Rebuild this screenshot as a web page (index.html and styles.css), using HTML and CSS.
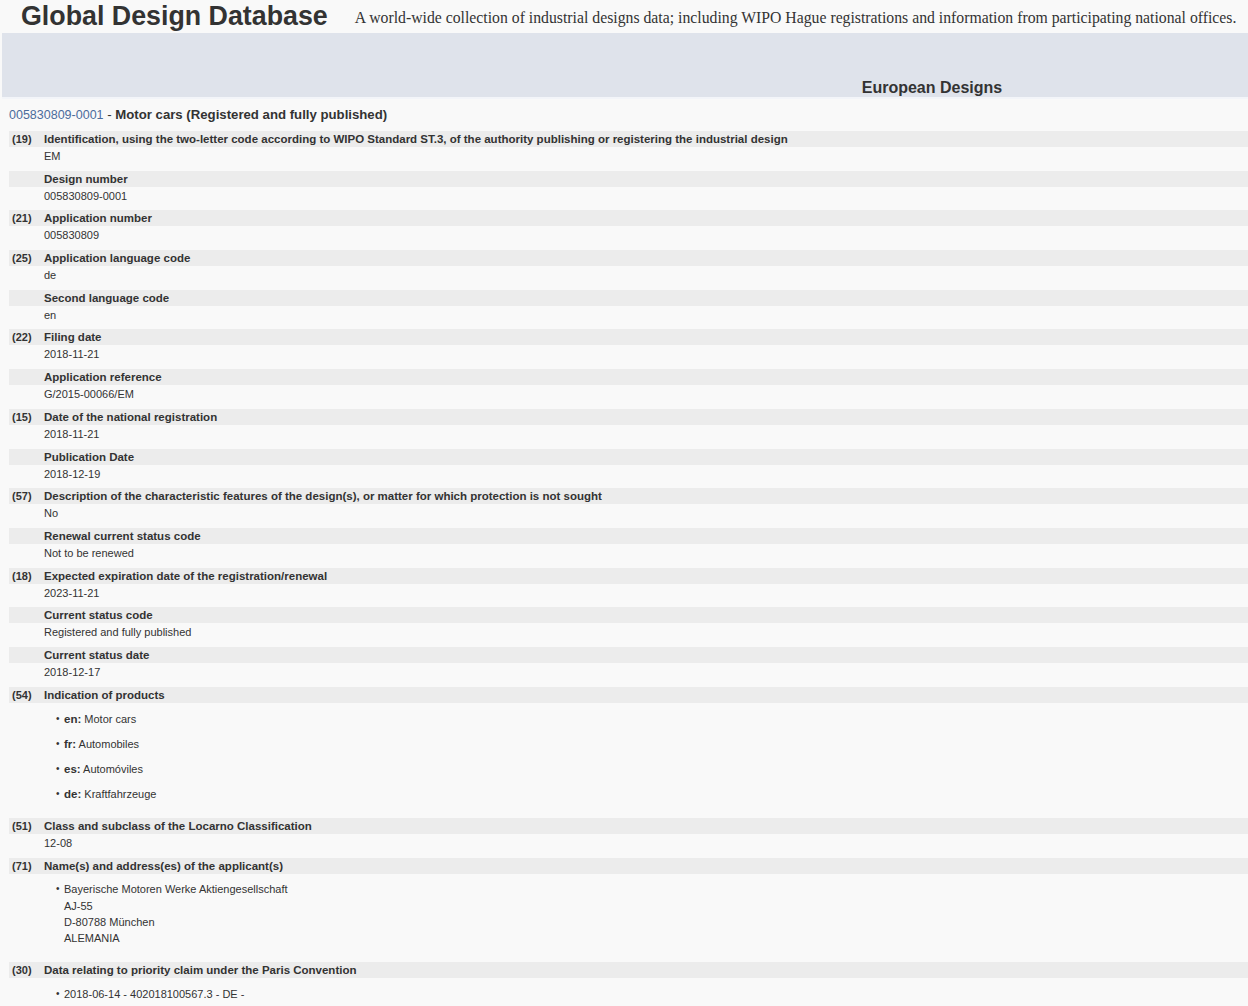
FILE: index.html
```html
<!DOCTYPE html>
<html>
<head>
<meta charset="utf-8">
<title>Global Design Database</title>
<link rel="stylesheet" href="styles.css">
</head>
<body>
<header class="top">
  <h1 class="brand">Global Design Database</h1>
  <p class="tagline">A world-wide collection of industrial designs data; including WIPO Hague registrations and information from participating national offices.</p>
</header>
<div class="band">
  <div class="band-spacer"></div>
  <h2 class="band-title">European Designs</h2>
</div>
<main class="record">
  <div class="rec-title"><a class="rec-link" href="#">005830809-0001</a> - <b>Motor cars (Registered and fully published)</b></div>

  <div class="field"><div class="lbl"><span class="code">(19)</span><span>Identification, using the two-letter code according to WIPO Standard ST.3, of the authority publishing or registering the industrial design</span></div><div class="val">EM</div></div>
  <div class="field"><div class="lbl"><span class="code"></span><span>Design number</span></div><div class="val">005830809-0001</div></div>
  <div class="field"><div class="lbl"><span class="code">(21)</span><span>Application number</span></div><div class="val">005830809</div></div>
  <div class="field"><div class="lbl"><span class="code">(25)</span><span>Application language code</span></div><div class="val">de</div></div>
  <div class="field"><div class="lbl"><span class="code"></span><span>Second language code</span></div><div class="val">en</div></div>
  <div class="field"><div class="lbl"><span class="code">(22)</span><span>Filing date</span></div><div class="val">2018-11-21</div></div>
  <div class="field"><div class="lbl"><span class="code"></span><span>Application reference</span></div><div class="val">G/2015-00066/EM</div></div>
  <div class="field"><div class="lbl"><span class="code">(15)</span><span>Date of the national registration</span></div><div class="val">2018-11-21</div></div>
  <div class="field"><div class="lbl"><span class="code"></span><span>Publication Date</span></div><div class="val">2018-12-19</div></div>
  <div class="field"><div class="lbl"><span class="code">(57)</span><span>Description of the characteristic features of the design(s), or matter for which protection is not sought</span></div><div class="val">No</div></div>
  <div class="field"><div class="lbl"><span class="code"></span><span>Renewal current status code</span></div><div class="val">Not to be renewed</div></div>
  <div class="field"><div class="lbl"><span class="code">(18)</span><span>Expected expiration date of the registration/renewal</span></div><div class="val">2023-11-21</div></div>
  <div class="field"><div class="lbl"><span class="code"></span><span>Current status code</span></div><div class="val">Registered and fully published</div></div>
  <div class="field"><div class="lbl"><span class="code"></span><span>Current status date</span></div><div class="val">2018-12-17</div></div>
  <div class="field"><div class="lbl"><span class="code">(54)</span><span>Indication of products</span></div>
    <ul class="products">
      <li><b>en:</b> Motor cars</li>
      <li><b>fr:</b> Automobiles</li>
      <li><b>es:</b> Automóviles</li>
      <li><b>de:</b> Kraftfahrzeuge</li>
    </ul>
  </div>
  <div class="field"><div class="lbl"><span class="code">(51)</span><span>Class and subclass of the Locarno Classification</span></div><div class="val val-gap">12-08</div></div>
  <div class="field"><div class="lbl"><span class="code">(71)</span><span>Name(s) and address(es) of the applicant(s)</span></div>
    <ul class="addr">
      <li>Bayerische Motoren Werke Aktiengesellschaft<br>AJ-55<br>D-80788 München<br>ALEMANIA</li>
    </ul>
  </div>
  <div class="field"><div class="lbl"><span class="code">(30)</span><span>Data relating to priority claim under the Paris Convention</span></div>
    <ul class="prio">
      <li>2018-06-14 - 402018100567.3 - DE -</li>
    </ul>
  </div>
</main>
</body>
</html>
```

FILE: styles.css
```css
html, body {
  margin: 0;
  padding: 0;
}
body {
  background: #f9f9f9;
  color: #333;
  font-family: "Liberation Sans", Arial, sans-serif;
}
.top {
  display: flex;
  align-items: center;
  height: 33px;
  padding-left: 21px;
}
.brand {
  margin: 0;
  font-size: 26.8px;
  font-weight: bold;
  line-height: 33px;
  color: #333;
}
.tagline {
  margin: 2px 0 0 27px;
  font-family: "Liberation Serif", "Times New Roman", serif;
  font-size: 15.75px;
  line-height: 18px;
  color: #333;
}
.band {
  margin-left: 2px;
  height: 64px;
  background: #dfe3eb;
  display: flex;
  align-items: flex-end;
  border-bottom: 2px solid #f3f5f9;
}
.band-spacer {
  flex: 1;
}
.band-title {
  margin: 0;
  width: 632px;
  text-align: center;
  font-size: 16px;
  line-height: 18px;
  color: #333;
}
.record {
  padding: 0 0 0 9px;
}
.rec-title {
  font-size: 13.2px;
  line-height: 18px;
  height: 18px;
  padding: 7px 0 7px;
  color: #333;
}
.rec-link {
  color: #4b6c9c;
  text-decoration: none;
  font-size: 12.5px;
}
.field {
  font-size: 11px;
}
.lbl {
  display: flex;
  background: #ececec;
  height: 16px;
  line-height: 16px;
  font-weight: bold;
  font-size: 11.5px;
}
.code {
  width: 32px;
  padding-left: 3px;
  flex: none;
  font-size: 11px;
}
.val {
  padding: 1px 0 6.7px 35px;
  line-height: 16px;
}
.val-gap {
  padding-bottom: 7.7px;
}
.products, .addr, .prio {
  margin: 0;
  padding-left: 55px;
  list-style: none;
}
.products li::before, .addr li::before, .prio li::before {
  content: "•";
  display: inline-block;
  width: 8px;
  margin-left: -8px;
  font-size: 10px;
  line-height: 10px;
  vertical-align: 1px;
}
.products {
  padding-top: 8px;
  padding-bottom: 7px;
}
.products li {
  height: 16px;
  line-height: 16px;
  margin-bottom: 9px;
}
.products b {
  font-size: 11.5px;
}
.addr {
  padding-top: 7px;
  padding-bottom: 15px;
}
.addr li, .prio li {
  line-height: 16.3px;
}
.prio {
  padding-top: 8px;
  padding-bottom: 4px;
}
```
